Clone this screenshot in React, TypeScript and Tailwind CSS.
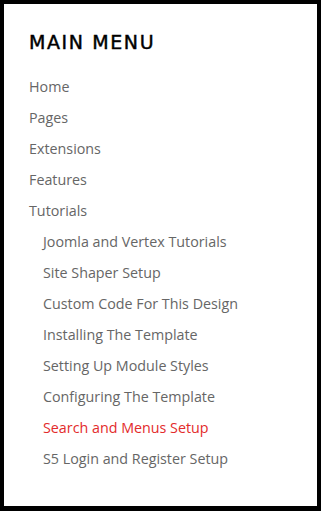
import React from 'react';

const topItems = ['Home', 'Pages', 'Extensions', 'Features', 'Tutorials'];

const subItems = [
  { label: 'Joomla and Vertex Tutorials' },
  { label: 'Site Shaper Setup' },
  { label: 'Custom Code For This Design' },
  { label: 'Installing The Template' },
  { label: 'Setting Up Module Styles' },
  { label: 'Configuring The Template' },
  { label: 'Search and Menus Setup', active: true },
  { label: 'S5 Login and Register Setup' },
];

export default function App() {
  return (
    <div className="w-[321px] h-[511px] bg-white border-black border-4 border-b-[5px] pl-[25px] pt-[26px]">
      {/* Title */}
      <h3
        className="text-[19px] leading-[24px] tracking-[1.6px] text-black mb-[17px] [-webkit-text-stroke:0.45px_black]"
        style={{ fontFamily: '"DejaVu Sans", sans-serif' }}
      >
        MAIN MENU
      </h3>

      {/* Menu */}
      <ul className="flex flex-col" style={{ fontFamily: '"Open Sans", sans-serif' }}>
        {topItems.map((item) => (
          <li key={item} className="text-[14.3px] leading-[31px] text-[#666]">
            <a href="#">{item}</a>
          </li>
        ))}
        {subItems.map((item) => (
          <li
            key={item.label}
            className={`text-[14.3px] leading-[31px] pl-[14px] ${item.active ? 'text-[#e32b2b]' : 'text-[#666]'}`}
          >
            <a href="#">{item.label}</a>
          </li>
        ))}
      </ul>
    </div>
  );
}
